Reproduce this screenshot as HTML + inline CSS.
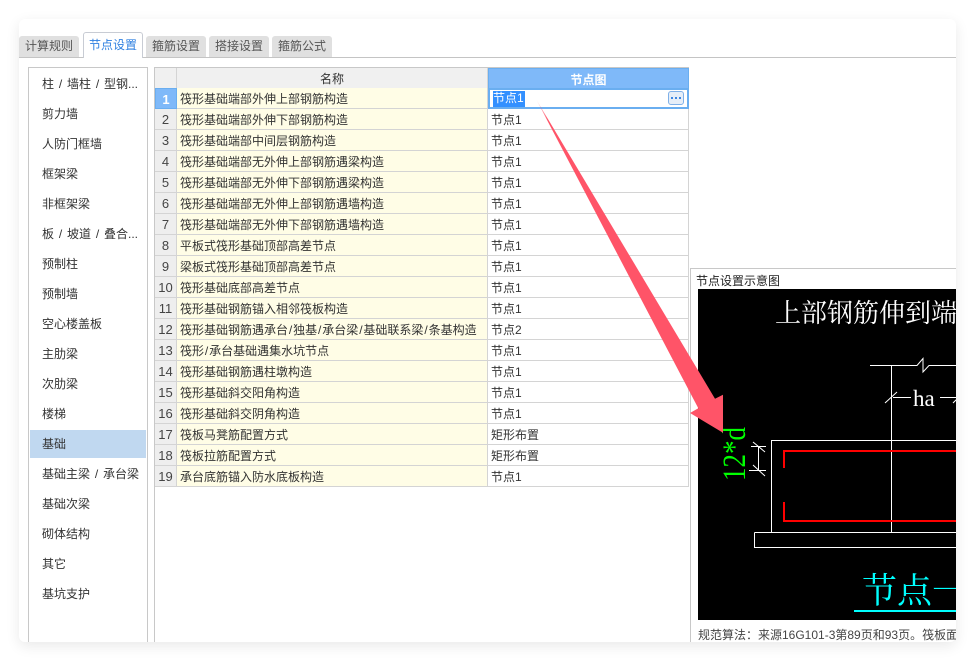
<!DOCTYPE html>
<html><head><meta charset="utf-8">
<style>
html,body{margin:0;padding:0;width:974px;height:660px;overflow:hidden;background:#fff}
body{font-family:"Liberation Sans","Noto Sans CJK SC",sans-serif;font-size:12px;color:#333;position:relative}
#card{position:absolute;left:19px;top:19px;width:937px;height:623px;background:#fff;border-radius:6px;box-shadow:0 4px 14px rgba(0,0,0,.09);overflow:hidden}
.abs{position:absolute}
.tab{position:absolute;top:17px;height:21px;line-height:21px;text-align:center;background:#e0e0e0;border-radius:3px 3px 0 0;color:#555;box-sizing:border-box}
#line{position:absolute;left:0;top:38px;width:937px;height:1px;background:#c4c4c4}
.tab.on{top:13px;height:26px;line-height:24px;background:#fff;border:1px solid #c8ccd4;border-bottom:none;color:#2f80e0;z-index:2}
#side{position:absolute;left:9px;top:48px;width:120px;height:590px;border:1px solid #c8c8c8;box-sizing:border-box;width:120px}
.it{position:absolute;left:1px;width:116px;height:28px;line-height:28px;padding-left:12px;box-sizing:border-box;white-space:nowrap;word-spacing:1.5px}
.it.on{background:#c0d8f0}
#grid{position:absolute;left:135px;top:48px;width:535px;height:590px;border-left:1px solid #c8c8c8}
.c{position:absolute;box-sizing:border-box;white-space:nowrap;height:21px;line-height:22px;border-bottom:1px solid #d4d4d4}
.n{left:0;width:22px;background:#eee;border-right:1px solid #d4d4d4;text-align:center;font-size:13px;color:#444}
.t{left:22px;width:311px;background:#fffde6;border-right:1px solid #d4d4d4;padding-left:3px}
.v{left:333px;width:201px;background:#fff;border-right:1px solid #d4d4d4;padding-left:3px}
.s{padding:0 .9px}
</style></head>
<body>
<div id="card">
<div class="tab" style="left:0;width:60px">计算规则</div>
<div class="tab on" style="left:64px;width:60px">节点设置</div>
<div class="tab" style="left:127px;width:60px">箍筋设置</div>
<div class="tab" style="left:190px;width:60px">搭接设置</div>
<div class="tab" style="left:253px;width:60px">箍筋公式</div>
<div id="line"></div>

<div id="side">
<div class="it" style="top:2px">柱 / 墙柱 / 型钢...</div>
<div class="it" style="top:32px">剪力墙</div>
<div class="it" style="top:62px">人防门框墙</div>
<div class="it" style="top:92px">框架梁</div>
<div class="it" style="top:122px">非框架梁</div>
<div class="it" style="top:152px">板 / 坡道 / 叠合...</div>
<div class="it" style="top:182px">预制柱</div>
<div class="it" style="top:212px">预制墙</div>
<div class="it" style="top:242px">空心楼盖板</div>
<div class="it" style="top:272px">主肋梁</div>
<div class="it" style="top:302px">次肋梁</div>
<div class="it" style="top:332px">楼梯</div>
<div class="it on" style="top:362px">基础</div>
<div class="it" style="top:392px">基础主梁 / 承台梁</div>
<div class="it" style="top:422px">基础次梁</div>
<div class="it" style="top:452px">砌体结构</div>
<div class="it" style="top:482px">其它</div>
<div class="it" style="top:512px">基坑支护</div>
</div>

<div id="grid">
<div class="abs" style="left:0;top:0;width:534px;height:1px;background:#c8c8c8"></div>
<div class="c n" style="top:1px;background:#f0f0f0;border-bottom-color:#c8c8c8"></div>
<div class="c t" style="top:1px;background:#f0f0f0;text-align:center;padding:0;border-bottom-color:#c8c8c8">名称</div>
<div class="c v" style="top:1px;background:#7fb9f9;color:#fff;text-align:center;padding:0;border:1px solid #6aaef0;border-bottom:none;font-weight:bold">节点图</div>

<div class="c n" style="top:21px;background:#7fb9f9;color:#fff;font-weight:bold;border:1px solid #6aaef0">1</div>
<div class="c t" style="top:21px">筏形基础端部外伸上部钢筋构造</div>
<div class="c v" style="top:21px;border:2px solid #6aaef0;line-height:17px;padding-left:3px"><span style="background:#3390ff;color:#fff;display:inline-block;height:16px;line-height:15px;margin-top:1px;padding-right:1px;vertical-align:top">节点1</span><span class="abs" style="left:178px;top:1px;width:16px;height:14px;background:#e6eef8;border:1px solid #7fb0e8;border-radius:3px;box-sizing:border-box"><span class="abs" style="left:2px;top:5px;width:2px;height:2px;background:#3f86e0"></span><span class="abs" style="left:6px;top:5px;width:2px;height:2px;background:#3f86e0"></span><span class="abs" style="left:10px;top:5px;width:2px;height:2px;background:#3f86e0"></span></span></div>

<div class="c n" style="top:42px">2</div><div class="c t" style="top:42px">筏形基础端部外伸下部钢筋构造</div><div class="c v" style="top:42px">节点1</div>
<div class="c n" style="top:63px">3</div><div class="c t" style="top:63px">筏形基础端部中间层钢筋构造</div><div class="c v" style="top:63px">节点1</div>
<div class="c n" style="top:84px">4</div><div class="c t" style="top:84px">筏形基础端部无外伸上部钢筋遇梁构造</div><div class="c v" style="top:84px">节点1</div>
<div class="c n" style="top:105px">5</div><div class="c t" style="top:105px">筏形基础端部无外伸下部钢筋遇梁构造</div><div class="c v" style="top:105px">节点1</div>
<div class="c n" style="top:126px">6</div><div class="c t" style="top:126px">筏形基础端部无外伸上部钢筋遇墙构造</div><div class="c v" style="top:126px">节点1</div>
<div class="c n" style="top:147px">7</div><div class="c t" style="top:147px">筏形基础端部无外伸下部钢筋遇墙构造</div><div class="c v" style="top:147px">节点1</div>
<div class="c n" style="top:168px">8</div><div class="c t" style="top:168px">平板式筏形基础顶部高差节点</div><div class="c v" style="top:168px">节点1</div>
<div class="c n" style="top:189px">9</div><div class="c t" style="top:189px">梁板式筏形基础顶部高差节点</div><div class="c v" style="top:189px">节点1</div>
<div class="c n" style="top:210px">10</div><div class="c t" style="top:210px">筏形基础底部高差节点</div><div class="c v" style="top:210px">节点1</div>
<div class="c n" style="top:231px">11</div><div class="c t" style="top:231px">筏形基础钢筋锚入相邻筏板构造</div><div class="c v" style="top:231px">节点1</div>
<div class="c n" style="top:252px">12</div><div class="c t" style="top:252px">筏形基础钢筋遇承台<span class="s">/</span>独基<span class="s">/</span>承台梁<span class="s">/</span>基础联系梁<span class="s">/</span>条基构造</div><div class="c v" style="top:252px">节点2</div>
<div class="c n" style="top:273px">13</div><div class="c t" style="top:273px">筏形<span class="s">/</span>承台基础遇集水坑节点</div><div class="c v" style="top:273px">节点1</div>
<div class="c n" style="top:294px">14</div><div class="c t" style="top:294px">筏形基础钢筋遇柱墩构造</div><div class="c v" style="top:294px">节点1</div>
<div class="c n" style="top:315px">15</div><div class="c t" style="top:315px">筏形基础斜交阳角构造</div><div class="c v" style="top:315px">节点1</div>
<div class="c n" style="top:336px">16</div><div class="c t" style="top:336px">筏形基础斜交阴角构造</div><div class="c v" style="top:336px">节点1</div>
<div class="c n" style="top:357px">17</div><div class="c t" style="top:357px">筏板马凳筋配置方式</div><div class="c v" style="top:357px">矩形布置</div>
<div class="c n" style="top:378px">18</div><div class="c t" style="top:378px">筏板拉筋配置方式</div><div class="c v" style="top:378px">矩形布置</div>
<div class="c n" style="top:399px">19</div><div class="c t" style="top:399px">承台底筋锚入防水底板构造</div><div class="c v" style="top:399px">节点1</div>
</div>
</div>

<svg class="abs" style="left:0;top:0;overflow:visible" width="974" height="660" viewBox="0 0 974 660">
<defs>
<clipPath id="cp"><rect x="19" y="19" width="937" height="623"/></clipPath>
<linearGradient id="ag" gradientUnits="userSpaceOnUse" x1="536" y1="99" x2="548" y2="120"><stop offset="0" stop-color="#ff5468" stop-opacity="0"/><stop offset="1" stop-color="#ff5468"/></linearGradient>
</defs>
<g clip-path="url(#cp)">
<path d="M690.500 268.500H956M690.500 268V642" stroke="#c8c8c8" fill="none"/>
<text x="696" y="285" font-size="12" fill="#222" font-family="'Liberation Sans','Noto Sans CJK SC',sans-serif">节点设置示意图</text>
<rect x="698" y="289" width="258" height="331" fill="#000"/>
<text x="775" y="322" font-size="26" fill="#fff" font-family="'Noto Serif CJK SC',serif">上部钢筋伸到端</text>
<g stroke="#fff" fill="none">
<path d="M870 365.500H917L923 358.500V372L929 365.500H956"/>
<path d="M891.500 365V532"/>
<path d="M771.500 532V440.500H956"/>
<path d="M754.500 532.500H956M754.500 532.500V547.500H956"/>
<path d="M885 403L897 392M893 397.500H911M940 397.500H956M953 403L958 398"/>
<path d="M751 446.500H766M758.500 446V470M749 470.500H766M753 442L765 452M753 465L765 476"/>
</g>
<text x="913" y="406" font-size="23" fill="#fff" font-family="'Liberation Serif',serif">ha</text>
<path d="M784 468V451H956M784 502V521H956" stroke="#f00" stroke-width="2" fill="none"/>
<text transform="translate(745 481) rotate(-90) scale(1 1.200)" font-size="27" fill="#0f0" font-family="'Liberation Serif',serif">12*d</text>
<text x="862" y="603" font-size="35" fill="#0ff" font-family="'Noto Serif CJK SC',serif">节点一</text>
<rect x="854" y="610" width="102" height="2" fill="#0ff"/>
<text x="698" y="639" font-size="12" fill="#444" font-family="'Liberation Sans','Noto Sans CJK SC',sans-serif">规范算法：来源16G101-3第89页和93页。筏板面</text>
</g>
<path d="M536 99L715 398.700L723 394.700V432.700L690 413L698.300 408.300Z" fill="url(#ag)"/>
</svg>
</body></html>
